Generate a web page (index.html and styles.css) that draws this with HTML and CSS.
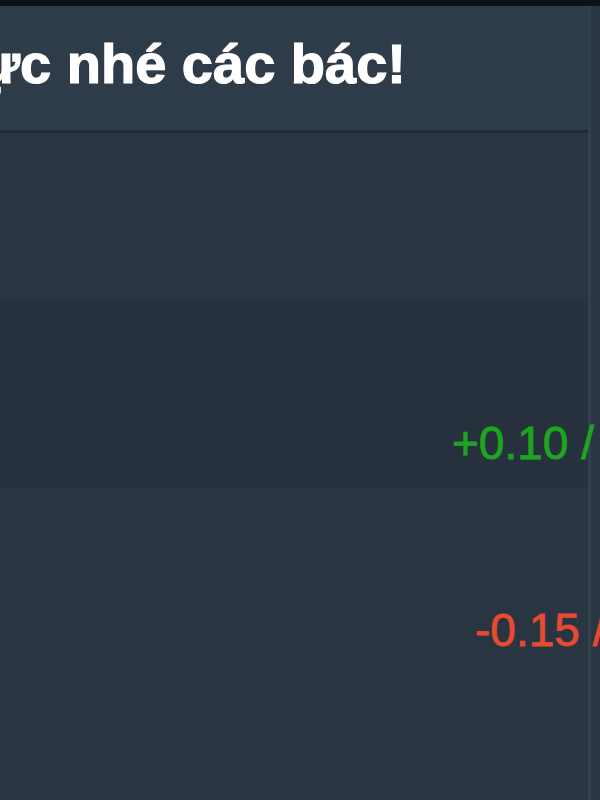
FILE: index.html
```html
<!DOCTYPE html>
<html lang="vi">
<head>
  <meta charset="UTF-8" />
  <meta name="viewport" content="width=device-width, initial-scale=1.0" />
  <title>Bảng giá</title>
  <link rel="stylesheet" href="styles.css">
</head>
<body>
  <div class="topbar"></div>

  <div class="panel">
    <div class="panel-header">
      <h2 class="title">Cùng nhau nỗ lực nhé các bác!</h2>
    </div>

    <div class="rows">
      <div class="row"></div>
      <div class="row row-alt">
        <span class="change up">+0.10 / +1.25%</span>
      </div>
      <div class="row row-last">
        <span class="change down">-0.15 / -2.10%</span>
      </div>
    </div>
  </div>
</body>
</html>
```

FILE: styles.css
```css
:root {
  --bg: #293642;
  --bg-alt: #26313d;
  --header-bg: #2e3c4a;
  --edge: #33414e;
  --up: #1da51f;
  --down: #e64a32;
}

* {
  box-sizing: border-box;
  margin: 0;
  padding: 0;
}

body {
  font-family: 'Liberation Sans', Arial, sans-serif;
  background: var(--bg);
  height: 800px;
  overflow: hidden;
  display: flex;
  flex-direction: column;
}

.topbar {
  height: 6px;
  background: #0c1219;
  flex-shrink: 0;
}

.panel {
  flex: 1;
  display: flex;
  flex-direction: column;
  border-right: 3px solid var(--edge);
  margin-right: 9px;
}

/* title is wider than the panel, only its end shows */
.panel-header {
  height: 127px;
  background: var(--header-bg);
  border-bottom: 3px solid #1f2a35;
  display: flex;
  align-items: center;
  justify-content: flex-end;
  padding-right: 182px;
  white-space: nowrap;
  overflow: hidden;
  flex-shrink: 0;
}

.title {
  color: #fff;
  font-size: 56px;
  font-weight: 700;
  -webkit-text-stroke: 1.2px #fff;
  padding-bottom: 10px;
  flex-shrink: 0;
}

.rows {
  flex: 1;
  display: flex;
  flex-direction: column;
}

.row {
  height: 169px;
  background: var(--bg);
  display: flex;
  align-items: flex-start;
  white-space: nowrap;
}

.row-alt {
  height: 185px;
  background: var(--bg-alt);
  padding-top: 114px;
}

.row-last {
  flex: 1;
  padding-top: 116px;
}

.change {
  font-size: 46px;
  flex-shrink: 0;
  -webkit-text-stroke: 0.8px currentColor;
}

.change.up {
  color: var(--up);
  margin-left: 452px;
}

.change.down {
  color: var(--down);
  margin-left: 475px;
}
```
